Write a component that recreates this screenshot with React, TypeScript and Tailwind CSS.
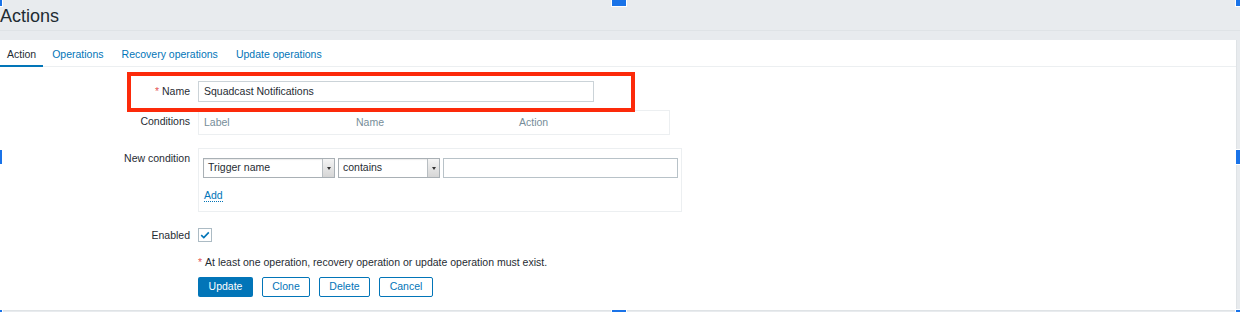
import React from "react";

const Select = ({ label, w }: { label: string; w: string }) => (
  <div className={`${w} h-[20px] flex border border-[#a9b0b5] bg-white shadow-[inset_0_1px_1px_rgba(0,0,0,0.08)]`}>
    <div className="flex-1 flex items-center pl-[4px] text-[10.5px] text-[#1f2c33]">{label}</div>
    <div className="w-[12px] h-full flex items-center justify-center border-l border-[#b8bec2] bg-gradient-to-b from-[#f4f4f4] to-[#d6d6d6]">
      <div className="w-0 h-0 border-l-[2.5px] border-r-[2.5px] border-t-[3px] border-l-transparent border-r-transparent border-t-[#333]" />
    </div>
  </div>
);

const Handle = ({ cls }: { cls: string }) => (
  <div className={`absolute bg-[#1a73e8] outline outline-1 outline-white ${cls}`} />
);

export default function App() {
  return (
    <div className="relative w-[1240px] h-[312px] bg-[#e8ebee] overflow-hidden font-['Liberation_Sans',Arial,sans-serif] text-[#1f2c33]">
      {/* header */}
      <div className="h-[31px] border-b border-[#dfe3e6] flex items-center">
        <h1 className="ml-0 mt-[2px] text-[18px] leading-none text-[#1f2c33]">Actions</h1>
      </div>
      <div className="h-[9px]" />
      {/* panel */}
      <div className="w-[1237px] h-[271px] bg-white border-r border-b border-[#dfe3e6] flex flex-col">
        {/* tabs */}
        <div className="h-[27px] border-b border-[#eceff1] flex text-[10.5px]">
          <div className="relative pl-[7px] pr-[7px] pt-[3px] flex items-center text-[#1f2c33]">
            Action
            <div className="absolute left-0 right-0 bottom-[-1px] h-[2px] bg-[#0275b8]" />
          </div>
          <div className="px-[9px] pt-[3px] flex items-center text-[#0275b8]">Operations</div>
          <div className="px-[9px] pt-[3px] flex items-center text-[#0275b8]">Recovery operations</div>
          <div className="px-[9px] pt-[3px] flex items-center text-[#0275b8]">Update operations</div>
        </div>

        {/* form */}
        <div className="flex flex-col text-[10.5px] pt-[14px]">
          {/* Name */}
          <div className="flex items-center h-[21px]">
            <div className="w-[190px] text-right">
              <span className="text-[#e45959] mr-[3px]">*</span>Name
            </div>
            <div className="ml-[8px] w-[396px] h-[21px] border border-[#cbd3d8] flex items-center pl-[5px]">
              Squadcast Notifications
            </div>
          </div>

          {/* Conditions */}
          <div className="flex items-start mt-[8px]">
            <div className="w-[190px] text-right pt-[4px] leading-[14px]">Conditions</div>
            <div className="ml-[8px] w-[472px] h-[25px] border border-[#eceff1] flex items-center text-[#768d99]">
              <div className="w-[157px] pl-[5px]">Label</div>
              <div className="w-[163px]">Name</div>
              <div>Action</div>
            </div>
          </div>

          {/* New condition */}
          <div className="flex items-start mt-[13px]">
            <div className="w-[190px] text-right pt-[3px] leading-[14px]">New condition</div>
            <div className="ml-[8px] w-[484px] h-[64px] border border-[#eceff1] flex flex-col pl-[4px] pt-[9px]">
              <div className="flex gap-[3px]">
                <Select label="Trigger name" w="w-[132px]" />
                <Select label="contains" w="w-[102px]" />
                <div className="w-[235px] h-[20px] border border-[#b8c2c8] bg-white" />
              </div>
              <div className="mt-[10px] pl-[1px]">
                <span className="text-[#0275b8] border-b border-dotted border-[#0275b8] leading-[12px] inline-block">Add</span>
              </div>
            </div>
          </div>

          {/* Enabled */}
          <div className="flex items-center mt-[16px] h-[14px]">
            <div className="w-[190px] text-right pt-[1px]">Enabled</div>
            <div className="ml-[8px] w-[14px] h-[14px] border border-[#acbbc4] bg-white flex items-center justify-center">
              <svg width="10" height="8" viewBox="0 0 10 8">
                <path d="M1.2 4.2 L3.8 6.6 L8.8 1.4" fill="none" stroke="#0275b8" strokeWidth="1.6" />
              </svg>
            </div>
          </div>

          {/* Note */}
          <div className="ml-[198px] mt-[13px] leading-[14px]">
            <span className="text-[#e45959] mr-[3px]">*</span>At least one operation, recovery operation or update operation must exist.
          </div>

          {/* Buttons */}
          <div className="ml-[198px] mt-[8px] flex gap-[9px]">
            <div className="w-[55px] h-[20px] bg-[#0275b8] text-white flex items-center justify-center rounded-[2px]">Update</div>
            <div className="w-[48px] h-[20px] border border-[#0275b8] text-[#0275b8] flex items-center justify-center rounded-[2px]">Clone</div>
            <div className="w-[51px] h-[20px] border border-[#0275b8] text-[#0275b8] flex items-center justify-center rounded-[2px]">Delete</div>
            <div className="w-[54px] h-[20px] border border-[#0275b8] text-[#0275b8] flex items-center justify-center rounded-[2px]">Cancel</div>
          </div>
        </div>
      </div>

      {/* red annotation rectangle */}
      <div className="absolute left-[127px] top-[72px] w-[508px] h-[40px] border-[4px] border-[#fc2a0a]" />

      {/* selection handles */}
      <Handle cls="left-0 top-0 w-[2px] h-[6px]" />
      <Handle cls="left-[612px] top-0 w-[14px] h-[6px]" />
      <Handle cls="left-[1236px] top-0 w-[4px] h-[6px]" />
      <Handle cls="left-0 top-[150px] w-[2px] h-[14px]" />
      <Handle cls="left-[1236px] top-[150px] w-[4px] h-[14px]" />
      <Handle cls="left-0 top-[310px] w-[2px] h-[2px]" />
      <Handle cls="left-[612px] top-[310px] w-[14px] h-[2px]" />
      <Handle cls="left-[1236px] top-[310px] w-[4px] h-[2px]" />
    </div>
  );
}
